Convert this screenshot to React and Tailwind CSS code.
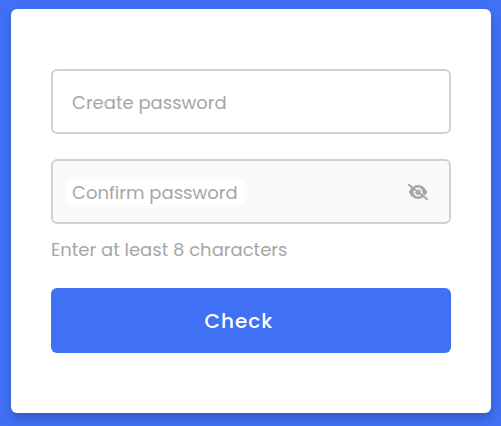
// Eye crossed by a rounded slash, with a narrow gap above the stroke.
function EyeSlash({ className }) {
  return (
    <svg viewBox="0 0 640 512" className={className} fill="none" strokeLinecap="round">
      <path
        transform="translate(32 0)"
        fill="#a6a6a6"
        d="M288 32c-80.8 0-145.5 36.8-192.6 80.6C48.6 156 17.3 208 2.5 243.7c-3.3 7.9-3.3 16.7 0 24.6C17.3 304 48.6 356 95.4 399.4C142.5 443.2 207.2 480 288 480s145.5-36.8 192.6-80.6c46.8-43.5 78.1-95.4 93-131.1c3.3-7.9 3.3-16.7 0-24.6c-14.9-35.7-46.2-87.7-93-131.1C433.5 68.8 368.8 32 288 32zM144 256a144 144 0 1 1 288 0 144 144 0 1 1 -288 0zm144-64c0 35.3-28.7 64-64 64c-7.1 0-13.9-1.2-20.3-3.3c-5.5-1.8-11.9 1.6-11.7 7.4c.3 6.9 1.3 13.8 3.2 20.7c13.7 51.2 66.4 81.6 117.6 67.9s81.6-66.4 67.9-117.6c-11.1-41.5-47.8-69.4-88.6-71.1c-5.8-.2-9.2 6.1-7.4 11.7c2.1 6.4 3.3 13.2 3.3 20.3z"
      />
      <path d="M52 -14L642 448" stroke="#fafafa" strokeWidth="16" />
      <path d="M26 26L614 486" stroke="#a6a6a6" strokeWidth="62" />
    </svg>
  );
}

export default function App() {
  return (
    <main className="h-[426px] w-[501px] overflow-hidden bg-[#4070f4] pt-[9px] pl-[11px] font-[Poppins,Inter,sans-serif] text-[18px] leading-[27px] text-[#a6a6a6]">
      <form className="flex h-[404px] w-[480px] flex-col rounded-[6px] bg-white px-10 pt-[60px] shadow-[0_5px_10px_rgba(0,0,0,0.2)]">
        <div className="flex h-[65px] shrink-0 items-center rounded-[6px] border-2 border-[#d1d1d1] pl-[19px]">
          <span className="mt-px">Create password</span>
        </div>
        <div className="mt-[25px] flex h-[65px] shrink-0 items-center justify-between rounded-[6px] border-2 border-[#d1d1d1] bg-[#fafafa] pr-[21px] pl-[13px]">
          <span className="mt-px h-[26px] bg-white px-[6px]">Confirm password</span>
          <EyeSlash className="mt-px h-4 w-5" />
        </div>
        <p className="mt-[12px]">Enter at least 8 characters</p>
        <button type="button" className="mt-[25px] flex h-[65px] shrink-0 items-center rounded-[6px] bg-[#4070f4] pt-[2px] pl-[153.5px] text-[20px] font-medium tracking-[1px] text-white">
          Check
        </button>
      </form>
    </main>
  );
}
